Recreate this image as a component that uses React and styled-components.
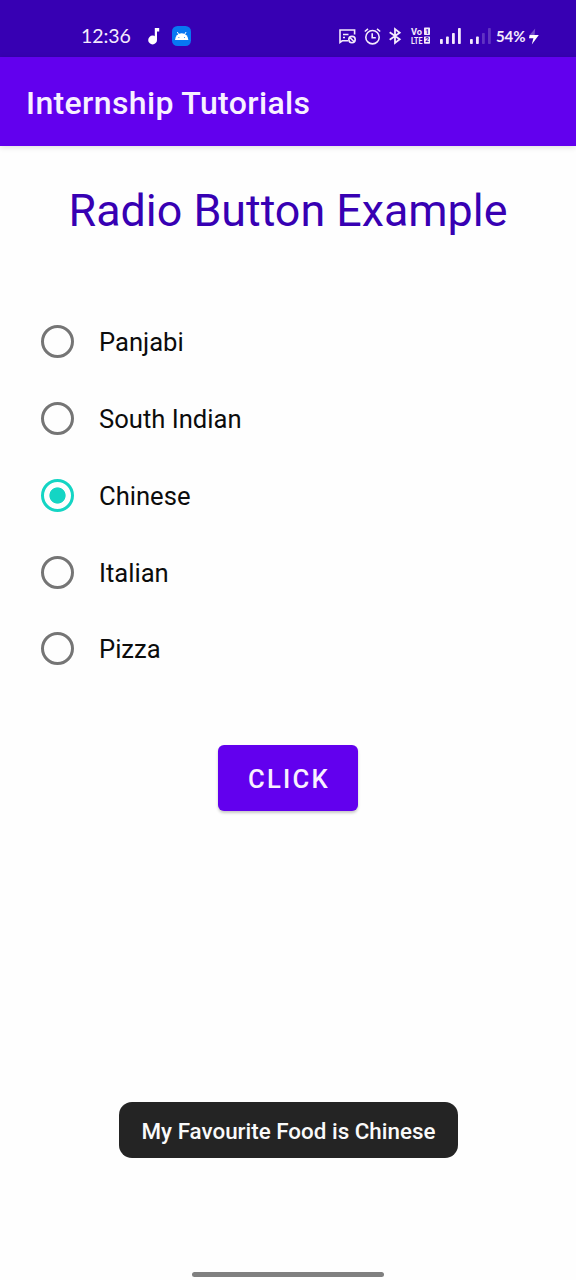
import React, { useState } from "react";
import styled, { createGlobalStyle } from "styled-components";

const GlobalStyle = createGlobalStyle`
  * { box-sizing: border-box; }
  body { margin: 0; background: #fefefe; font-family: Roboto, "Liberation Sans", sans-serif; }
`;

const Screen = styled.div`
  width: 576px;
  height: 1280px;
  display: flex;
  flex-direction: column;
  background: #fefefe;
  overflow: hidden;
`;

const StatusBar = styled.header`
  flex: none;
  height: 56.5px;
  padding: 16px 37px 0 81px;
  display: flex;
  justify-content: space-between;
  align-items: flex-start;
  background: #3700b3;
  color: #f4eafc;
`;

const StatusGroup = styled.div`
  height: 40px;
  display: flex;
  align-items: center;
`;

const Clock = styled.span`
  width: 49px;
  margin-top: -1px;
  font: 400 19.5px/24px Lato, sans-serif;
  letter-spacing: -0.1px;
  white-space: nowrap;
`;

const Battery = styled.span`
  width: 30px;
  margin: -1px 0 0 5px;
  font: 700 15px/20px Lato, sans-serif;
  letter-spacing: -0.1px;
  white-space: nowrap;
`;

const Icon = styled.svg`
  display: block;
  flex: none;
  margin-left: ${(p) => p.$gap}px;
  overflow: visible;
`;

const AppBar = styled.div`
  flex: none;
  height: 89.5px;
  padding: 3px 26px 0;
  display: flex;
  align-items: center;
  background: #6200ee;
  box-shadow: 0 1px 6px rgba(0, 0, 0, 0.14);
  color: #f8f0ff;
  font-size: 32px;
  font-weight: 500;
  letter-spacing: 0.36px;
  white-space: nowrap;
`;

const Content = styled.main`
  flex: 1;
  display: flex;
  flex-direction: column;
  align-items: center;
`;

const Heading = styled.h1`
  margin: 38px 0 0;
  font-size: 44.8px;
  line-height: 54px;
  font-weight: 400;
  color: #3700b3;
  white-space: nowrap;
`;

const Options = styled.div`
  align-self: stretch;
  margin-top: 65.3px;
  padding-left: 41px;
`;

const Option = styled.label`
  height: 76.8px;
  display: flex;
  align-items: center;
  gap: 25px;
  font-size: 25.6px;
  color: #0c0c0c;
`;

const OptionText = styled.span`
  padding-top: 1px;
`;

const Radio = styled.input`
  appearance: none;
  flex: none;
  width: 33px;
  height: 33px;
  margin: 0;
  border: 3.2px solid #757575;
  border-radius: 50%;
  &:checked {
    border-color: #14d5c4;
    background: radial-gradient(circle, #14d5c4 7.7px, transparent 8.5px);
  }
`;

const Button = styled.button`
  width: 140px;
  height: 66px;
  margin-top: 57.7px;
  padding: 2px 0 0 2px;
  border: 0;
  border-radius: 6px;
  background: #6200ee;
  box-shadow: 0 2px 3px rgba(0, 0, 0, 0.22);
  color: #f8f0ff;
  font: 500 25.6px Roboto, sans-serif;
  letter-spacing: 2.29px;
  white-space: nowrap;
`;

const Toast = styled.div`
  width: 339px;
  height: 56px;
  margin-top: auto;
  padding: 2px 0 0 1px;
  display: flex;
  align-items: center;
  justify-content: center;
  border-radius: 13px;
  background: #242424;
  color: #fafafa;
  font-size: 22.4px;
  font-weight: 500;
  white-space: nowrap;
`;

const HomeHandle = styled.div`
  width: 192px;
  height: 5px;
  margin: 114px 0 3.5px;
  border-radius: 3px;
  background: #808080;
`;

const NoteIcon = () => (
  <Icon $gap={18} width="12" height="18" viewBox="0 0 12 18" fill="#fff">
    <circle cx="4.6" cy="13" r="4.4" />
    <path d="M6.8 1H11.2V4.6H9V13H6.8Z" />
  </Icon>
);

const AndroidIcon = () => (
  <Icon $gap={12} width="19" height="20" viewBox="0 0 19 20">
    <rect width="19" height="20" rx="5.5" fill="#0877f2" />
    <path d="M3 14A6.6 6.6 0 0 1 16.4 14Z" fill="#fff" />
    <path d="M5.3 6l1.8 3M14.1 6l-1.8 3" stroke="#fff" strokeWidth="1" />
    <circle cx="6.9" cy="11.6" r=".5" fill="#0877f2" />
    <circle cx="12.5" cy="11.6" r=".5" fill="#0877f2" />
  </Icon>
);

const CardOffIcon = () => (
  <Icon $gap={0} width="17" height="15" viewBox="0 0 17 15" fill="none" stroke="#f4eafc" strokeWidth="1.6">
    <path d="M15.6 5.5V1H1V13.4L3.2 11.8H9M4 5.5H9.5M4 8.5H6" />
    <circle cx="13" cy="10.6" r="3.2" />
    <path d="M10.9 8.5L15.1 12.7" />
  </Icon>
);

const AlarmIcon = () => (
  <Icon $gap={8} width="17" height="17" viewBox="0 0 17 17" fill="none" stroke="#f4eafc" strokeWidth="1.6">
    <circle cx="8.5" cy="9.2" r="6.7" />
    <path d="M8.2 5.2V9.7H11.8M.8 3.5L4 .9M16.2 3.5L13 .9" />
  </Icon>
);

const BluetoothIcon = () => (
  <Icon $gap={8} width="12" height="16" viewBox="0 0 12 16" fill="none" stroke="#f4eafc" strokeWidth="1.8">
    <path d="M.7 4.2L10.7 11.3L6 15V1L10.7 4.7L.7 11.8" />
  </Icon>
);

const VolteIcon = () => (
  <Icon
    $gap={10}
    width="19"
    height="18"
    viewBox="0 0 19 18"
    fill="#f4eafc"
    fontFamily="Roboto, sans-serif"
    fontWeight="700"
  >
    <text transform="translate(0 7.6)" fontSize="9.3">Vo</text>
    <text transform="translate(0 16.9) scale(.76 1)" fontSize="9.3">LTE</text>
    <rect x="13" y=".6" width="6" height="7.4" rx=".7" />
    <rect x="13" y="9.4" width="6" height="7.4" rx=".7" />
    <text x="14.2" y="6.6" fill="#3700b3" fontSize="6.5">1</text>
    <text x="14.2" y="15.4" fill="#3700b3" fontSize="6.5">2</text>
  </Icon>
);

const BARS = [5, 7.5, 11, 16];

const SignalIcon = ({ level, gap }) => (
  <Icon $gap={gap} width="21" height="16" viewBox="0 0 21 16" fill="#f4eafc">
    {BARS.map((h, i) => (
      <rect key={h} x={i * 6} y={16 - h} width="2.8" height={h} rx=".8" opacity={i < level ? 1 : 0.22} />
    ))}
  </Icon>
);

const BoltIcon = () => (
  <Icon $gap={3} width="10" height="17" viewBox="0 0 10 17" fill="#fff">
    <path d="M6.2 .5L.6 7H5.6Z" opacity=".3" />
    <path d="M.6 7H9.8L2.8 16.6L4.4 10.2H0Z" />
  </Icon>
);

const FOODS = ["Panjabi", "South Indian", "Chinese", "Italian", "Pizza"];

export default function App() {
  const [choice, setChoice] = useState("Chinese");
  const [message, setMessage] = useState("Chinese");

  return (
    <>
      <GlobalStyle />
      <Screen>
        <StatusBar>
          <StatusGroup>
            <Clock>12:36</Clock>
            <NoteIcon />
            <AndroidIcon />
          </StatusGroup>
          <StatusGroup>
            <CardOffIcon />
            <AlarmIcon />
            <BluetoothIcon />
            <VolteIcon />
            <SignalIcon level={4} gap={10} />
            <SignalIcon level={2} gap={9} />
            <Battery>54%</Battery>
            <BoltIcon />
          </StatusGroup>
        </StatusBar>
        <AppBar>Internship Tutorials</AppBar>
        <Content>
          <Heading>Radio Button Example</Heading>
          <Options>
            {FOODS.map((food) => (
              <Option key={food}>
                <Radio type="radio" name="food" checked={choice === food} onChange={() => setChoice(food)} />
                <OptionText>{food}</OptionText>
              </Option>
            ))}
          </Options>
          <Button onClick={() => setMessage(choice)}>CLICK</Button>
          <Toast>My Favourite Food is {message}</Toast>
          <HomeHandle />
        </Content>
      </Screen>
    </>
  );
}
